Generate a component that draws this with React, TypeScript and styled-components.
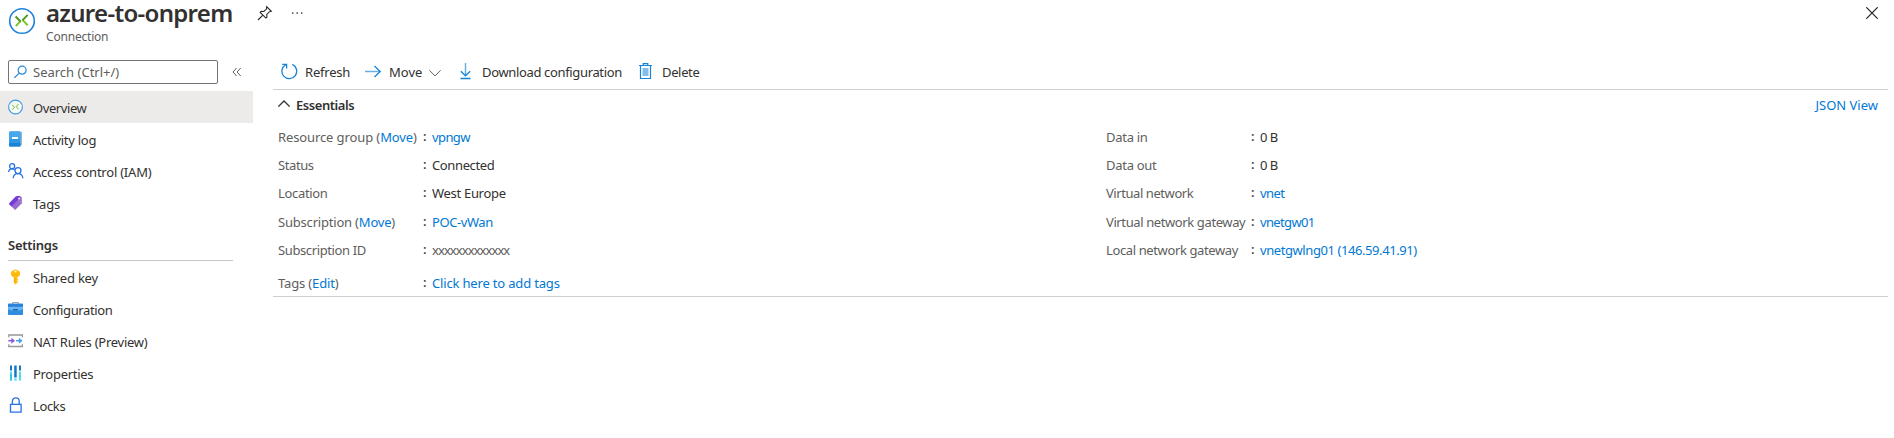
import React from 'react';
import styled, { createGlobalStyle } from 'styled-components';

const GlobalStyle = createGlobalStyle`
  *, *::before, *::after { box-sizing: border-box; }
  body {
    margin: 0;
    background: #fff;
    color: #323130;
    font: 13px/18px "Noto Sans", "Open Sans", sans-serif;
    overflow: hidden;
  }
  svg { display: block; flex: none; }
`;

const Blade = styled.div`
  display: flex;
  flex-direction: column;
  width: 100%;
  height: 438px;
  overflow: hidden;
`;

const Text = styled.span<{ $track?: number }>`
  white-space: pre;
  letter-spacing: ${(p) => p.$track ?? 0}px;
`;

const Header = styled.header`
  display: flex;
  flex: none;
  height: 60px;
  padding-left: 8px;
`;

const HeaderIcon = styled.div`
  width: 38px;
  padding-top: 7px;
`;

const Heading = styled.div`
  display: flex;
  flex-direction: column;
  width: 211px;
`;

const Title = styled.h1`
  margin: 0;
  height: 28px;
  font-size: 24px;
  line-height: 26px;
  font-weight: 600;
  letter-spacing: -0.7px;
  white-space: nowrap;
`;

const Subtitle = styled.div`
  height: 18px;
  color: #605e5c;
  font-size: 12px;
  letter-spacing: -0.2px;
`;

const HeaderActions = styled.div`
  display: flex;
  flex: 1;
  gap: 18px;
  padding-top: 5px;
`;

const CloseButton = styled.div`
  padding: 7px 16px 0 0;
`;

const Body = styled.div`
  display: flex;
  flex: 1;
  min-height: 0;
`;

const Sidebar = styled.nav`
  display: flex;
  flex-direction: column;
  flex: none;
  width: 253px;
`;

const SearchRow = styled.div`
  display: flex;
  align-items: center;
  gap: 14px;
  height: 24px;
  margin: 0 0 7px 8px;
`;

const SearchBox = styled.div`
  display: flex;
  align-items: center;
  gap: 6px;
  width: 210px;
  height: 24px;
  padding-left: 5px;
  border: 1px solid #76746f;
  border-radius: 2px;
  color: #605e5c;
`;

const NavItem = styled.div<{ $active?: boolean }>`
  display: flex;
  align-items: center;
  flex: none;
  gap: 9px;
  height: 32px;
  padding-left: 8px;
  background: ${(p) => (p.$active ? '#edebe9' : 'transparent')};

  ${Text} { padding-top: 2px; }
`;

const SectionTitle = styled.div`
  flex: none;
  height: 42px;
  margin: 0 20px 0 8px;
  padding-top: 17px;
  border-bottom: 1px solid #c8c6c4;
  font-weight: 600;
`;

const Content = styled.main`
  flex: 1;
  min-width: 0;
  margin: 0 6px 0 20px;
`;

const Toolbar = styled.div`
  display: flex;
  height: 30px;
  padding-left: 8px;
  border-bottom: 1px solid #d2d0ce;
`;

const Command = styled.div<{ $width: number; $gap: number }>`
  display: flex;
  align-items: center;
  gap: ${(p) => p.$gap}px;
  width: ${(p) => p.$width}px;
  height: 24px;
  white-space: nowrap;

  svg { margin-top: -2px; }
`;

const EssentialsBar = styled.div`
  display: flex;
  height: 34px;
  padding: 6px 10px 0 5px;
  gap: 6px;
`;

const EssentialsTitle = styled.div`
  flex: 1;
  font-weight: 600;
`;

const Link = styled.a<{ $track?: number }>`
  color: #0078d4;
  letter-spacing: ${(p) => p.$track ?? 0}px;
  white-space: pre;
`;

const Columns = styled.div`
  display: grid;
  grid-template-columns: 828px 1fr;
  height: 173px;
  padding-left: 5px;
  border-bottom: 1px solid #d2d0ce;
`;

const PropertyList = styled.div`
  display: flex;
  flex-direction: column;
`;

const Property = styled.div<{ $height: number }>`
  display: grid;
  grid-template-columns: 145px 9px auto;
  align-items: start;
  height: ${(p) => p.$height}px;
  padding-top: 4px;
`;

const Label = styled.div<{ $track?: number }>`
  color: #605e5c;
  letter-spacing: ${(p) => p.$track ?? 0}px;
  white-space: nowrap;
`;

const Colon = styled.div`
  position: relative;
  top: -1px;
  font-weight: 500;
`;

const Mark = () => (
  <svg width="28" height="28" viewBox="0 0 28 28" fill="none">
    <circle cx="14" cy="14" r="12.3" stroke="#1b82dc" strokeWidth="1.6" fill="#fff" />
    <path d="M12.300 14.100L7.900 19.200M14.700 13.100l5 5.100" stroke="#7ac52c" strokeWidth="2" />
    <path d="M7.600 9.500l5.200 5.300M19.700 7.900l-5.300 5.500" stroke="#4e9a1c" strokeWidth="2" />
  </svg>
);

const SmallMark = () => (
  <svg width="16" height="16" viewBox="0 0 16 16" fill="none">
    <circle cx="7.500" cy="8" r="6.900" stroke="#3f9ae6" strokeWidth="1.100" fill="#f8faf5" />
    <path d="M4 5.700l2.500 2.500L4.200 10.700M10.700 4.900L8 7.600l2.700 2.600" stroke="#72b52f" strokeWidth="1" />
  </svg>
);

const PinIcon = () => (
  <svg width="16" height="16" viewBox="0 0 16 16" fill="none" stroke="#292827" strokeWidth="1.1">
    <path d="M9.7 1.7l4.600 4.600-1.800.4-2.700 2.700.1 2.800-1 .9-5.700-5.700 1-1 2.700.1 2.700-2.700zM5.800 10.100L1 15" />
  </svg>
);

const MoreIcon = () => (
  <svg width="13" height="16" viewBox="0 0 13 16" fill="#323130">
    <circle cx="1.7" cy="8" r=".85" /><circle cx="6.2" cy="8" r=".85" /><circle cx="10.7" cy="8" r=".85" />
  </svg>
);

const CloseIcon = () => (
  <svg width="12" height="12" viewBox="0 0 12 12" stroke="#201f1e" strokeWidth="1.2">
    <path d="M.3.3l11.400 11.400M11.700.3L.3 11.700" />
  </svg>
);

const SearchIcon = () => (
  <svg width="13" height="14" viewBox="0 0 13 14" fill="none" stroke="#2b88d8" strokeWidth="1.2">
    <circle cx="8.1" cy="5.2" r="4" /><path d="M5.200 8.100L.4 12.800" />
  </svg>
);

const CollapseIcon = () => (
  <svg width="10" height="10" viewBox="0 0 10 10" fill="none" stroke="#605e5c">
    <path d="M4.600 1L1 5l3.600 4M8.700 1L5.100 5l3.600 4" />
  </svg>
);

const LogIcon = () => (
  <svg width="16" height="16" viewBox="0 0 16 16">
    <path d="M3 .8h10.200q.8 0 .8.8v12q0 .8-.8.8H3z" fill="#8fb8d6" />
    <path d="M2 .5h9.800q.6 0 .6.6v13.800q0 .6-.6.6H2q-.9 0-.9-.9V1.400Q1.100.5 2 .5z" fill="#2e98e4" />
    <path d="M2 .5h9.800q.6 0 .6.6V8H1.100V1.400Q1.100.5 2 .5z" fill="#46a8ec" />
    <path d="M1.100 12h11.300v2.900q0 .6-.6.6H2q-.9 0-.9-.9z" fill="#1c82d2" />
    <rect x="4" y="6" width="6" height="1.900" rx=".3" fill="#fff" />
  </svg>
);

const AccessIcon = () => (
  <svg width="16" height="16" viewBox="0 0 16 16" fill="none" stroke="#2672e2" strokeWidth="1.3">
    <circle cx="4.100" cy="3.200" r="2.500" /><path d="M.6 9c.2-2 1.600-3.200 3.500-3.200 1 0 1.900.3 2.500.9" />
    <circle cx="10" cy="7.600" r="3" /><path d="M5.100 15.300c.3-2.900 2.200-4.600 4.900-4.600s4.600 1.700 4.900 4.600" />
  </svg>
);

const TagIcon = () => (
  <svg width="16" height="16" viewBox="0 0 16 16">
    <path d="M8 1.500l3-.7 2.600 1.200.5 5.400q0 .7-.5 1.200L7.700 14.400q-.6.600-1.200 0L1.300 9.300q-.5-.5 0-1z" fill="#9a6bcf" />
    <path d="M1.300 8.300L7.500 1.700q.4-.4 1-.5L11 .9l1.600 1L3.600 11.500 1.300 9.300q-.5-.5 0-1z" fill="#763bd8" />
    <path d="M11.800 6.700l1.800-.2" stroke="#ccb2ea" strokeWidth=".7" fill="none" />
    <circle cx="11.100" cy="3.500" r="1" fill="#f2ecfa" />
  </svg>
);

const KeyIcon = () => (
  <svg width="16" height="16" viewBox="0 0 16 16">
    <path d="M7.500.3L11 2q1.100.6 1.100 1.800v1.500q0 1-.8 1.700L9.300 8.600v5.100l-1.800 1.900-1.700-1.900V8.600L3.700 7q-.8-.7-.8-1.700V3.800q0-1.200 1.100-1.800z" fill="#ffbd12" />
    <path d="M9.300 10h1v1h-1zM9.300 12h1v1h-1z" fill="#ffbd12" />
    <path d="M6.900 8.800v4.700" stroke="#f59b00" strokeWidth=".8" />
    <circle cx="7.500" cy="2.500" r="1.100" fill="#fff5cf" />
    <path d="M4.700 5.200h5.600" stroke="#f2a800" strokeWidth=".7" />
  </svg>
);

const ToolboxIcon = () => (
  <svg width="16" height="16" viewBox="0 0 16 16">
    <path d="M4.500 3V1.500h6V3" fill="none" stroke="#a3a3a3" />
    <rect x="0" y="2.500" width="15" height="11.500" rx=".8" fill="#318bdf" />
    <path d="M0 3.300h15V5H0z" fill="#2a80d8" />
    <path d="M0 6h15v2.200L10 9.700H5L0 8.200z" fill="#67b7f5" />
    <path d="M5 8h5v1.500H5z" fill="#1d62aa" />
  </svg>
);

const NatIcon = () => (
  <svg width="16" height="16" viewBox="0 0 16 16" fill="none">
    <path d="M.8 4.200V2h13.600v2.200M.8 11.300v2.200h13.600v-2.200" stroke="#94989b" strokeWidth="1.300" />
    <path d="M.3 7.700h4" stroke="#8b57db" strokeWidth="1.500" /><path d="M3.400 4.700l3.600 3-3.600 3z" fill="#8b57db" />
    <path d="M8 7.700h3" stroke="#45a0ec" strokeWidth="1.500" /><path d="M10.900 4.700l3.700 3-3.700 3z" fill="#45a0ec" />
  </svg>
);

const PropertiesIcon = () => (
  <svg width="16" height="16" viewBox="0 0 16 16">
    <path d="M2 .5h2v5H2zM6.200.5h2.500v12H6.200zM11 .5h2v5h-2z" fill="#1478c9" />
    <path d="M2 6.500h2v9H2zM11 6.500h2v9h-2zM6.200 13.500h2.500v2H6.200z" fill="#50dcf5" />
    <path d="M2 9h2v6.500H2z" fill="#32c8df" />
  </svg>
);

const LockIcon = () => (
  <svg width="16" height="16" viewBox="0 0 16 16" fill="none" stroke="#2672e2" strokeWidth="1.300">
    <path d="M2.500 7.300h10.600v7.900H2.500zM4.400 7V4.200a3.400 3.400 0 0 1 6.800 0V7" />
  </svg>
);

const RefreshIcon = () => (
  <svg width="17" height="17" viewBox="0 0 17 17" fill="none" stroke="#1683d8" strokeWidth="1.300">
    <path d="M11.300 1.400a7.400 7.400 0 1 1-6.600.3M1.300 1.300h4.300v4.200" />
  </svg>
);

const MoveIcon = () => (
  <svg width="17" height="17" viewBox="0 0 17 17" fill="none">
    <path d="M0 8.500h15" stroke="#69afe5" strokeWidth="1.500" />
    <path d="M9.500 3l5.700 5.500L9.500 14" stroke="#1683d8" strokeWidth="1.300" />
  </svg>
);

const ChevronDown = () => (
  <svg width="12" height="17" viewBox="0 0 12 17" fill="none" stroke="#605e5c">
    <path d="M.4 7.300L6 12.900l5.600-5.600" />
  </svg>
);

const ChevronUp = () => (
  <svg width="12" height="14" viewBox="0 0 12 14" fill="none" stroke="#323130" strokeWidth="1.300">
    <path d="M.4 10.600L6 5l5.600 5.600" />
  </svg>
);

const DownloadIcon = () => (
  <svg width="12" height="17" viewBox="0 0 12 17" fill="none">
    <path d="M5.500 0v12.500" stroke="#69afe5" strokeWidth="1.500" />
    <path d="M.8 8.200l4.700 4.600 4.700-4.600M.5 15.500h10" stroke="#1683d8" strokeWidth="1.300" />
  </svg>
);

const DeleteIcon = () => (
  <svg width="14" height="17" viewBox="0 0 14 17" fill="none">
    <path d="M3.500 5h6v8h-6z" fill="#83bdea" />
    <path d="M0 2.500h13M4.200 2.300V.6h4.600v1.700M1.500 2.500v13h10v-13" stroke="#1683d8" strokeWidth="1.200" />
  </svg>
);

interface NavEntry { icon: React.ReactNode; name: string; track: number; active?: boolean }

const mainNav: NavEntry[] = [
  { icon: <SmallMark />, name: 'Overview', track: -0.42, active: true },
  { icon: <LogIcon />, name: 'Activity log', track: -0.28 },
  { icon: <AccessIcon />, name: 'Access control (IAM)', track: -0.22 },
  { icon: <TagIcon />, name: 'Tags', track: -0.15 },
];

const settingsNav: NavEntry[] = [
  { icon: <KeyIcon />, name: 'Shared key', track: -0.2 },
  { icon: <ToolboxIcon />, name: 'Configuration', track: -0.38 },
  { icon: <NatIcon />, name: 'NAT Rules (Preview)', track: -0.26 },
  { icon: <PropertiesIcon />, name: 'Properties', track: -0.3 },
  { icon: <LockIcon />, name: 'Locks', track: -0.35 },
];

interface Entry {
  label: string; labelTrack: number; action?: string;
  value: string; track: number; link?: boolean; muted?: boolean; height: number;
}

const leftProps: Entry[] = [
  { label: 'Resource group', labelTrack: -0.11, action: 'Move', value: 'vpngw', track: -0.6, link: true, height: 28 },
  { label: 'Status', labelTrack: -0.4, value: 'Connected', track: -0.38, height: 28 },
  { label: 'Location', labelTrack: -0.33, value: 'West Europe', track: -0.3, height: 29 },
  { label: 'Subscription', labelTrack: -0.2, action: 'Move', value: 'POC-vWan', track: -0.42, link: true, height: 28 },
  { label: 'Subscription ID', labelTrack: -0.38, value: 'xxxxxxxxxxxxx', track: -0.93, muted: true, height: 33 },
  { label: 'Tags', labelTrack: -0.15, action: 'Edit', value: 'Click here to add tags', track: -0.17, link: true, height: 26 },
];

const rightProps: Entry[] = [
  { label: 'Data in', labelTrack: -0.28, value: '0 B', track: -0.5, height: 28 },
  { label: 'Data out', labelTrack: -0.28, value: '0 B', track: -0.5, height: 28 },
  { label: 'Virtual network', labelTrack: -0.43, value: 'vnet', track: -0.6, link: true, height: 29 },
  { label: 'Virtual network gateway', labelTrack: -0.39, value: 'vnetgw01', track: -0.65, link: true, height: 28 },
  { label: 'Local network gateway', labelTrack: -0.38, value: 'vnetgwlng01 (146.59.41.91)', track: -0.42, link: true, height: 33 },
];

const Muted = styled(Text)`
  color: #605e5c;
`;

const NavGroup = ({ items }: { items: NavEntry[] }) => (
  <>
    {items.map((it) => (
      <NavItem key={it.name} $active={it.active}>
        {it.icon}
        <Text $track={it.track}>{it.name}</Text>
      </NavItem>
    ))}
  </>
);

const Properties = ({ items }: { items: Entry[] }) => (
  <PropertyList>
    {items.map((p) => (
      <Property key={p.label} $height={p.height}>
        <Label $track={p.labelTrack}>
          {p.label}
          {p.action && <> (<Link $track={p.labelTrack}>{p.action}</Link>)</>}
        </Label>
        <Colon>:</Colon>
        {p.link ? <Link $track={p.track}>{p.value}</Link>
          : p.muted ? <Muted $track={p.track}>{p.value}</Muted>
          : <Text $track={p.track}>{p.value}</Text>}
      </Property>
    ))}
  </PropertyList>
);

export default function App() {
  return (
    <>
      <GlobalStyle />
      <Blade>
        <Header>
          <HeaderIcon><Mark /></HeaderIcon>
          <Heading>
            <Title>azure-to-onprem</Title>
            <Subtitle>Connection</Subtitle>
          </Heading>
          <HeaderActions><PinIcon /><MoreIcon /></HeaderActions>
          <CloseButton><CloseIcon /></CloseButton>
        </Header>
        <Body>
          <Sidebar>
            <SearchRow>
              <SearchBox><SearchIcon /><Text>Search (Ctrl+/)</Text></SearchBox>
              <CollapseIcon />
            </SearchRow>
            <NavGroup items={mainNav} />
            <SectionTitle><Text $track={-0.25}>Settings</Text></SectionTitle>
            <NavGroup items={settingsNav} />
          </Sidebar>
          <Content>
            <Toolbar>
              <Command $width={84} $gap={7}><RefreshIcon /><Text $track={-0.2}>Refresh</Text></Command>
              <Command $width={95} $gap={7}><MoveIcon /><Text $track={0}>Move</Text><ChevronDown /></Command>
              <Command $width={179} $gap={10}><DownloadIcon /><Text $track={-0.35}>Download configuration</Text></Command>
              <Command $width={70} $gap={9}><DeleteIcon /><Text $track={-0.35}>Delete</Text></Command>
            </Toolbar>
            <EssentialsBar>
              <ChevronUp />
              <EssentialsTitle><Text $track={-0.45}>Essentials</Text></EssentialsTitle>
              <Link>JSON View</Link>
            </EssentialsBar>
            <Columns>
              <Properties items={leftProps} />
              <Properties items={rightProps} />
            </Columns>
          </Content>
        </Body>
      </Blade>
    </>
  );
}
